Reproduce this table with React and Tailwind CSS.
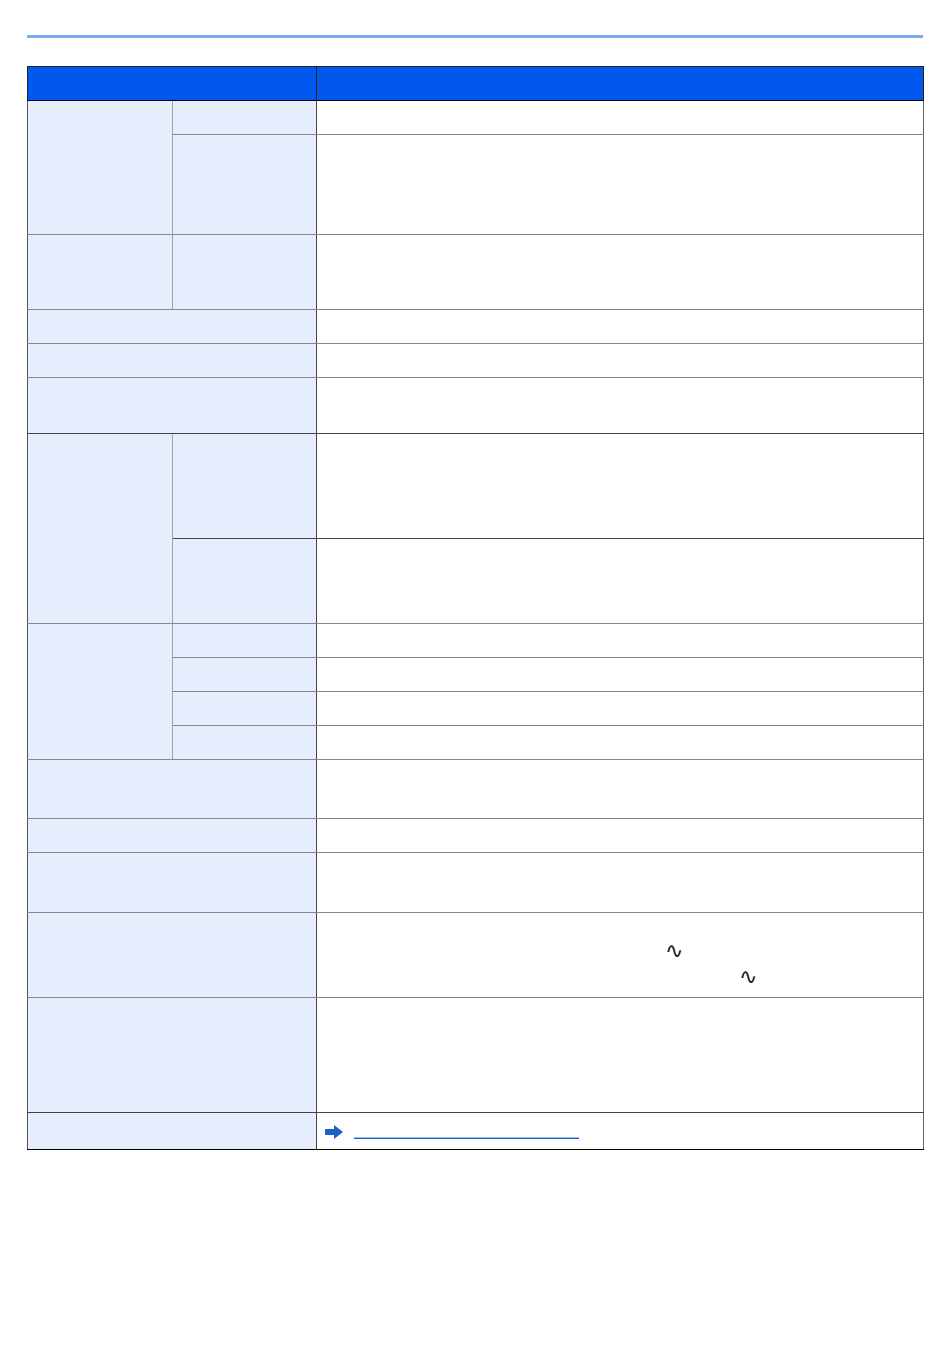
import React from 'react';

const H = 'border-b border-[#85898f]';
const L1 = 'bg-[#e6edfc] border-l border-l-[#555] border-r border-r-[#a0a4ab]';
const L2 = 'bg-[#e6edfc] border-r border-r-[#444]';
const LS = 'bg-[#e6edfc] border-l border-l-[#555] border-r border-r-[#444]';
const R = 'bg-white border-r border-r-[#666]';

const Row = ({ h, children }) => <tr className={h}>{children}</tr>;

export default function App() {
  return (
    <div className="w-[950px] min-h-[1370px] bg-white pt-[35px] px-[27px]" style={{ fontFamily: '"Liberation Sans", Arial, sans-serif' }}>
      <div className="h-[3px] w-[896px] bg-[#7fa8f5]" />
      <table className="mt-[28px] w-[896px] table-fixed border-collapse">
        <colgroup>
          <col className="w-[145px]" />
          <col className="w-[144px]" />
          <col className="w-[607px]" />
        </colgroup>
        <thead>
          <tr className="h-[34px] bg-[#0058ee]">
            <th colSpan={2} className="border border-[#222] border-b-black" />
            <th className="border border-[#222] border-b-black" />
          </tr>
        </thead>
        <tbody>
          <Row h="h-[34px]">
            <td rowSpan={2} className={`${L1} ${H}`} />
            <td className={`${L2} ${H}`} />
            <td className={`${R} ${H}`} />
          </Row>
          <Row h="h-[100px]">
            <td className={`${L2} ${H}`} />
            <td className={`${R} ${H}`} />
          </Row>
          <Row h="h-[75px]">
            <td className={`${L1} ${H}`} />
            <td className={`${L2} ${H}`} />
            <td className={`${R} ${H}`} />
          </Row>
          <Row h="h-[34px]">
            <td colSpan={2} className={`${LS} ${H}`} />
            <td className={`${R} ${H}`} />
          </Row>
          <Row h="h-[34px]">
            <td colSpan={2} className={`${LS} ${H}`} />
            <td className={`${R} ${H}`} />
          </Row>
          <Row h="h-[56px]">
            <td colSpan={2} className={`${LS} border-b border-[#444]`} />
            <td className={`${R} border-b border-b-[#444]`} />
          </Row>
          <Row h="h-[105px]">
            <td rowSpan={2} className={`${L1} ${H}`} />
            <td className={`${L2} border-b border-b-[#444]`} />
            <td className={`${R} border-b border-b-[#444]`} />
          </Row>
          <Row h="h-[85px]">
            <td className={`${L2} ${H}`} />
            <td className={`${R} ${H}`} />
          </Row>
          <Row h="h-[34px]">
            <td rowSpan={4} className={`${L1} ${H}`} />
            <td className={`${L2} ${H}`} />
            <td className={`${R} ${H}`} />
          </Row>
          <Row h="h-[34px]">
            <td className={`${L2} ${H}`} />
            <td className={`${R} ${H}`} />
          </Row>
          <Row h="h-[34px]">
            <td className={`${L2} ${H}`} />
            <td className={`${R} ${H}`} />
          </Row>
          <Row h="h-[34px]">
            <td className={`${L2} ${H}`} />
            <td className={`${R} ${H}`} />
          </Row>
          <Row h="h-[59px]">
            <td colSpan={2} className={`${LS} ${H}`} />
            <td className={`${R} ${H}`} />
          </Row>
          <Row h="h-[34px]">
            <td colSpan={2} className={`${LS} ${H}`} />
            <td className={`${R} ${H}`} />
          </Row>
          <Row h="h-[60px]">
            <td colSpan={2} className={`${LS} ${H}`} />
            <td className={`${R} ${H}`} />
          </Row>
          <Row h="h-[85px]">
            <td colSpan={2} className={`${LS} ${H}`} />
            <td className={`${R} ${H} align-top`}>
              <div className="flex flex-col pt-[25px] text-[22px] leading-[26px] text-[#1a1a1a]" style={{ fontFamily: '"DejaVu Sans", sans-serif' }}>
                <span className="pl-[348px]">∿</span>
                <span className="pl-[422px]">∿</span>
              </div>
            </td>
          </Row>
          <Row h="h-[115px]">
            <td colSpan={2} className={`${LS} border-b border-b-[#444]`} />
            <td className={`${R} border-b border-b-[#444]`} />
          </Row>
          <Row h="h-[37px]">
            <td colSpan={2} className={`${LS} border-b border-b-black`} />
            <td className={`${R} border-b border-b-black`}>
              <div className="flex items-center pl-[8px] pt-[1px]">
                <svg width="18" height="14" viewBox="0 0 18 14">
                  <path d="M0 4h9V0l9 7-9 7v-4H0z" fill="#1d5fc4" />
                </svg>
                <span className="ml-[11px] mt-[12px] h-[2px] w-[225px] border-b border-[#1a5fd0] bg-[#9cbcf0]" />
              </div>
            </td>
          </Row>
        </tbody>
      </table>
    </div>
  );
}
